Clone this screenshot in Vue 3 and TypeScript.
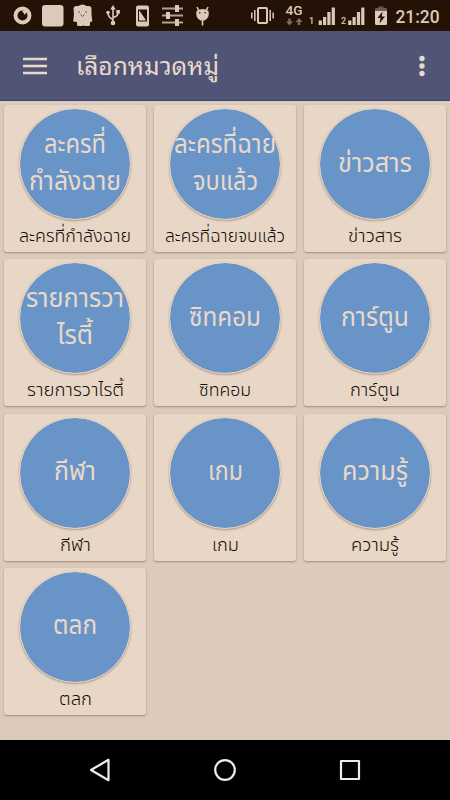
<script setup lang="ts">
interface Line {
  text: string
  width: number
}
interface Category {
  name: string
  captionWidth: number
  lines: Line[]
}

const title = 'เลือกหมวดหมู่'

const categories: Category[] = [
  { name: 'ละครที่กำลังฉาย', captionWidth: 112, lines: [{ text: 'ละครที่', width: 62 }, { text: 'กำลังฉาย', width: 92 }] },
  { name: 'ละครที่ฉายจบแล้ว', captionWidth: 120, lines: [{ text: 'ละครที่ฉาย', width: 102 }, { text: 'จบแล้ว', width: 65 }] },
  { name: 'ข่าวสาร', captionWidth: 54, lines: [{ text: 'ข่าวสาร', width: 74 }] },
  { name: 'รายการวาไรตี้', captionWidth: 97, lines: [{ text: 'รายการวา', width: 98 }, { text: 'ไรตี้', width: 36 }] },
  { name: 'ซิทคอม', captionWidth: 52, lines: [{ text: 'ซิทคอม', width: 72 }] },
  { name: 'การ์ตูน', captionWidth: 50, lines: [{ text: 'การ์ตูน', width: 68 }] },
  { name: 'กีฬา', captionWidth: 31, lines: [{ text: 'กีฬา', width: 42 }] },
  { name: 'เกม', captionWidth: 27, lines: [{ text: 'เกม', width: 35 }] },
  { name: 'ความรู้', captionWidth: 48, lines: [{ text: 'ความรู้', width: 66 }] },
  { name: 'ตลก', captionWidth: 33, lines: [{ text: 'ตลก', width: 44 }] },
]
</script>

<template>
  <div class="screen">
    <header class="status">
      <svg class="status-icons" width="450" height="31" viewBox="0 0 450 31">
        <g fill="#dbc9b9">
          <circle cx="22.500" cy="15.500" r="7" fill="none" stroke="#dbc9b9" stroke-width="4" />
          <path d="M22 11l6-2-3 6z" />
          <rect x="42" y="5" width="21.500" height="21.500" rx="3" />
          <path d="M73.500 9q0-3 3-3h2q1.500-1.500 4-1.500t4 1.500h2q3 0 3 3v5l.8 7.500-2.300.5v3.500q-3.500 1-6.500 0-2.500 1-6.500 0v-3.500l-3.800-.5.800-7.500z" />
          <path d="M79 11v2M86 11v2M80.500 14.500l2 2 2-2" stroke="#6b5a4c" fill="none" />
          <path d="M113 5l2.700 4.500h-5.400z" />
          <path d="M113 8v14M113 19.500q-5-2-5-7M113 17.500q5-1 5-5" fill="none" stroke="#dbc9b9" stroke-width="1.600" />
          <circle cx="113" cy="23" r="2.300" />
          <circle cx="108" cy="12.500" r="1.800" />
          <rect x="116.300" y="10" width="3.600" height="3.600" />
          <rect x="136" y="5.500" width="13" height="21" rx="2" />
          <rect x="138.500" y="10" width="8" height="11" fill="none" stroke="#241206" />
          <path d="M139 10l7.500 11V10z" fill="#241206" />
          <path d="M162 8.500h21M162 15.500h21M162 22.500h21" stroke="#b3a395" stroke-width="1.800" />
          <rect x="175" y="5" width="4" height="7" />
          <rect x="166" y="12" width="4" height="7" />
          <rect x="175" y="19" width="4" height="7" />
          <path d="M196.500 11q6-4 12 0 1.500 6.500-4 9.500h-4q-5.500-3-4-9.500z" />
          <path d="M197 7l2 4M208 7l-2 4M202.500 20v5.500" stroke="#dbc9b9" stroke-width="1.600" />
          <circle cx="199.800" cy="12.800" r=".8" fill="#241206" />
          <circle cx="205.200" cy="12.800" r=".8" fill="#241206" />
          <rect x="258" y="8" width="9" height="15" rx="1" fill="none" stroke="#dbc9b9" stroke-width="2" />
          <path d="M254.800 10v11M270.200 10v11M251.800 12.500v6M273.200 12.500v6" stroke="#dbc9b9" stroke-width="1.500" />
          <g fill="#7d6e62">
            <path d="M288.300 18.500h2.400v3h2.300l-3.500 4-3.500-4h2.300z" />
            <path d="M297.800 25v-3h-2.300l3.500-4 3.500 4h-2.300v3z" />
          </g>
          <path d="M318.700 20.500h3.200v4.500h-3.200zM323 17h3.200v8h-3.200zM327.300 12h3.200v13h-3.200zM331.700 7.500h3.200v17.500h-3.200z" />
          <path d="M348.200 20.500h3.200v4.500h-3.200zM352.500 17h3.200v8h-3.200zM356.900 12h3.200v13h-3.200zM361.200 7.500h3.200v17.500h-3.200z" />
          <path d="M375 11h12v12.500q0 1.500-1.500 1.500h-9q-1.500 0-1.500-1.500z" />
          <path d="M375 11V9q0-1 1-1h2.500V6.500h5V8h2.500q1 0 1 1v2z" fill="#6b5a4e" />
          <path d="M382.500 11.500l-5 6.500h3l-1 5.500 5.500-7h-3.200z" fill="#241206" />
        </g>
        <g class="status-text">
          <text x="285.500" y="15" font-size="12.500" textLength="17" lengthAdjust="spacingAndGlyphs">4G</text>
          <text x="309" y="24" font-size="9">1</text>
          <text x="341" y="24" font-size="9">2</text>
          <text x="395.500" y="22.500" font-size="19" textLength="44" lengthAdjust="spacingAndGlyphs">21:20</text>
        </g>
      </svg>
    </header>

    <div class="toolbar">
      <svg class="menu" width="24" height="18" viewBox="0 0 24 18">
        <path d="M0 2h24M0 9h24M0 16h24" stroke="#ead9c9" stroke-width="2.300" />
      </svg>
      <svg class="title" width="143" height="40">
        <text x="0" y="29" textLength="143" lengthAdjust="spacingAndGlyphs">{{ title }}</text>
      </svg>
      <svg class="more" width="6" height="22" viewBox="0 0 6 22">
        <g fill="#ead9c9">
          <circle cx="3" cy="3.500" r="2.700" />
          <circle cx="3" cy="11" r="2.700" />
          <circle cx="3" cy="18.500" r="2.700" />
        </g>
      </svg>
    </div>

    <main class="grid">
      <article v-for="c in categories" :key="c.name" class="card">
        <div class="disc">
          <svg v-for="l in c.lines" :key="l.text" class="line" :width="l.width" height="37">
            <text x="0" y="25.500" :textLength="l.width" lengthAdjust="spacingAndGlyphs">{{ l.text }}</text>
          </svg>
        </div>
        <svg class="caption" :width="c.captionWidth" height="28">
          <text x="0" y="19" :textLength="c.captionWidth" lengthAdjust="spacingAndGlyphs">{{ c.name }}</text>
        </svg>
      </article>
    </main>

    <nav class="navbar">
      <svg width="24" height="26" viewBox="0 0 24 26"><path d="M3 13L20.500 2.800v20.400z" /></svg>
      <svg width="24" height="26" viewBox="0 0 24 26"><circle cx="12" cy="13" r="9.800" /></svg>
      <svg width="24" height="26" viewBox="0 0 24 26"><rect x="3" y="4" width="18" height="18" /></svg>
    </nav>
  </div>
</template>

<style>
body {
  margin: 0;
  background: #dccaba;
}
</style>

<style scoped>
.screen {
  width: 450px;
  height: 800px;
  display: flex;
  flex-direction: column;
  overflow: hidden;
  background: #dccaba;
  font-family: 'Noto Sans Thai', 'Noto Sans', Roboto, sans-serif;
}
svg {
  display: block;
  flex: none;
}
.status {
  height: 31px;
  background: #241206;
}
.status-text {
  fill: #dbc9b9;
  font-family: Roboto, sans-serif;
  font-weight: 500;
}
.toolbar {
  height: 69px;
  flex: none;
  display: flex;
  align-items: center;
  padding: 0 25px 0 23px;
  background: #505578;
  border-bottom: 1px solid #3b4478;
}
.title {
  margin-left: 29px;
  overflow: visible;
  fill: #ead9c9;
  font-family: 'Noto Sans Thai Looped', 'Noto Looped Thai', Loma, Garuda, 'Noto Sans Thai', 'Noto Sans', sans-serif;
  font-size: 25px;
}
.more {
  margin-left: auto;
}
.grid {
  flex: 1;
  display: grid;
  grid-template-columns: repeat(3, 142px);
  grid-auto-rows: 147px;
  column-gap: 8px;
  row-gap: 7.330px;
  align-content: start;
  padding: 4px 4px 0;
}
.card {
  display: flex;
  flex-direction: column;
  align-items: center;
  padding-top: 3px;
  box-sizing: border-box;
  border-radius: 3px;
  background: #e8d7c7;
  box-shadow: 0 1px 2px rgba(90, 65, 45, 0.45);
}
.disc {
  width: 110px;
  height: 110px;
  flex: none;
  display: flex;
  flex-direction: column;
  align-items: center;
  justify-content: center;
  border: 1px solid #e8d7c7;
  border-radius: 50%;
  background: #6894c7;
  background-clip: padding-box;
  box-shadow: 0 1px 2px rgba(90, 65, 45, 0.4);
}
.line {
  overflow: visible;
  fill: #ead9c9;
  font-size: 26px;
  font-weight: 400;
}
.caption {
  margin-top: 3px;
  overflow: visible;
  fill: #100b08;
  font-size: 18.500px;
  font-weight: 300;
}
.navbar {
  height: 60px;
  flex: none;
  display: flex;
  justify-content: space-between;
  align-items: center;
  box-sizing: border-box;
  padding: 0 88px;
  background: #000;
}
.navbar path,
.navbar circle,
.navbar rect {
  fill: none;
  stroke: #ececec;
  stroke-width: 2.200;
  stroke-linejoin: round;
}
</style>
